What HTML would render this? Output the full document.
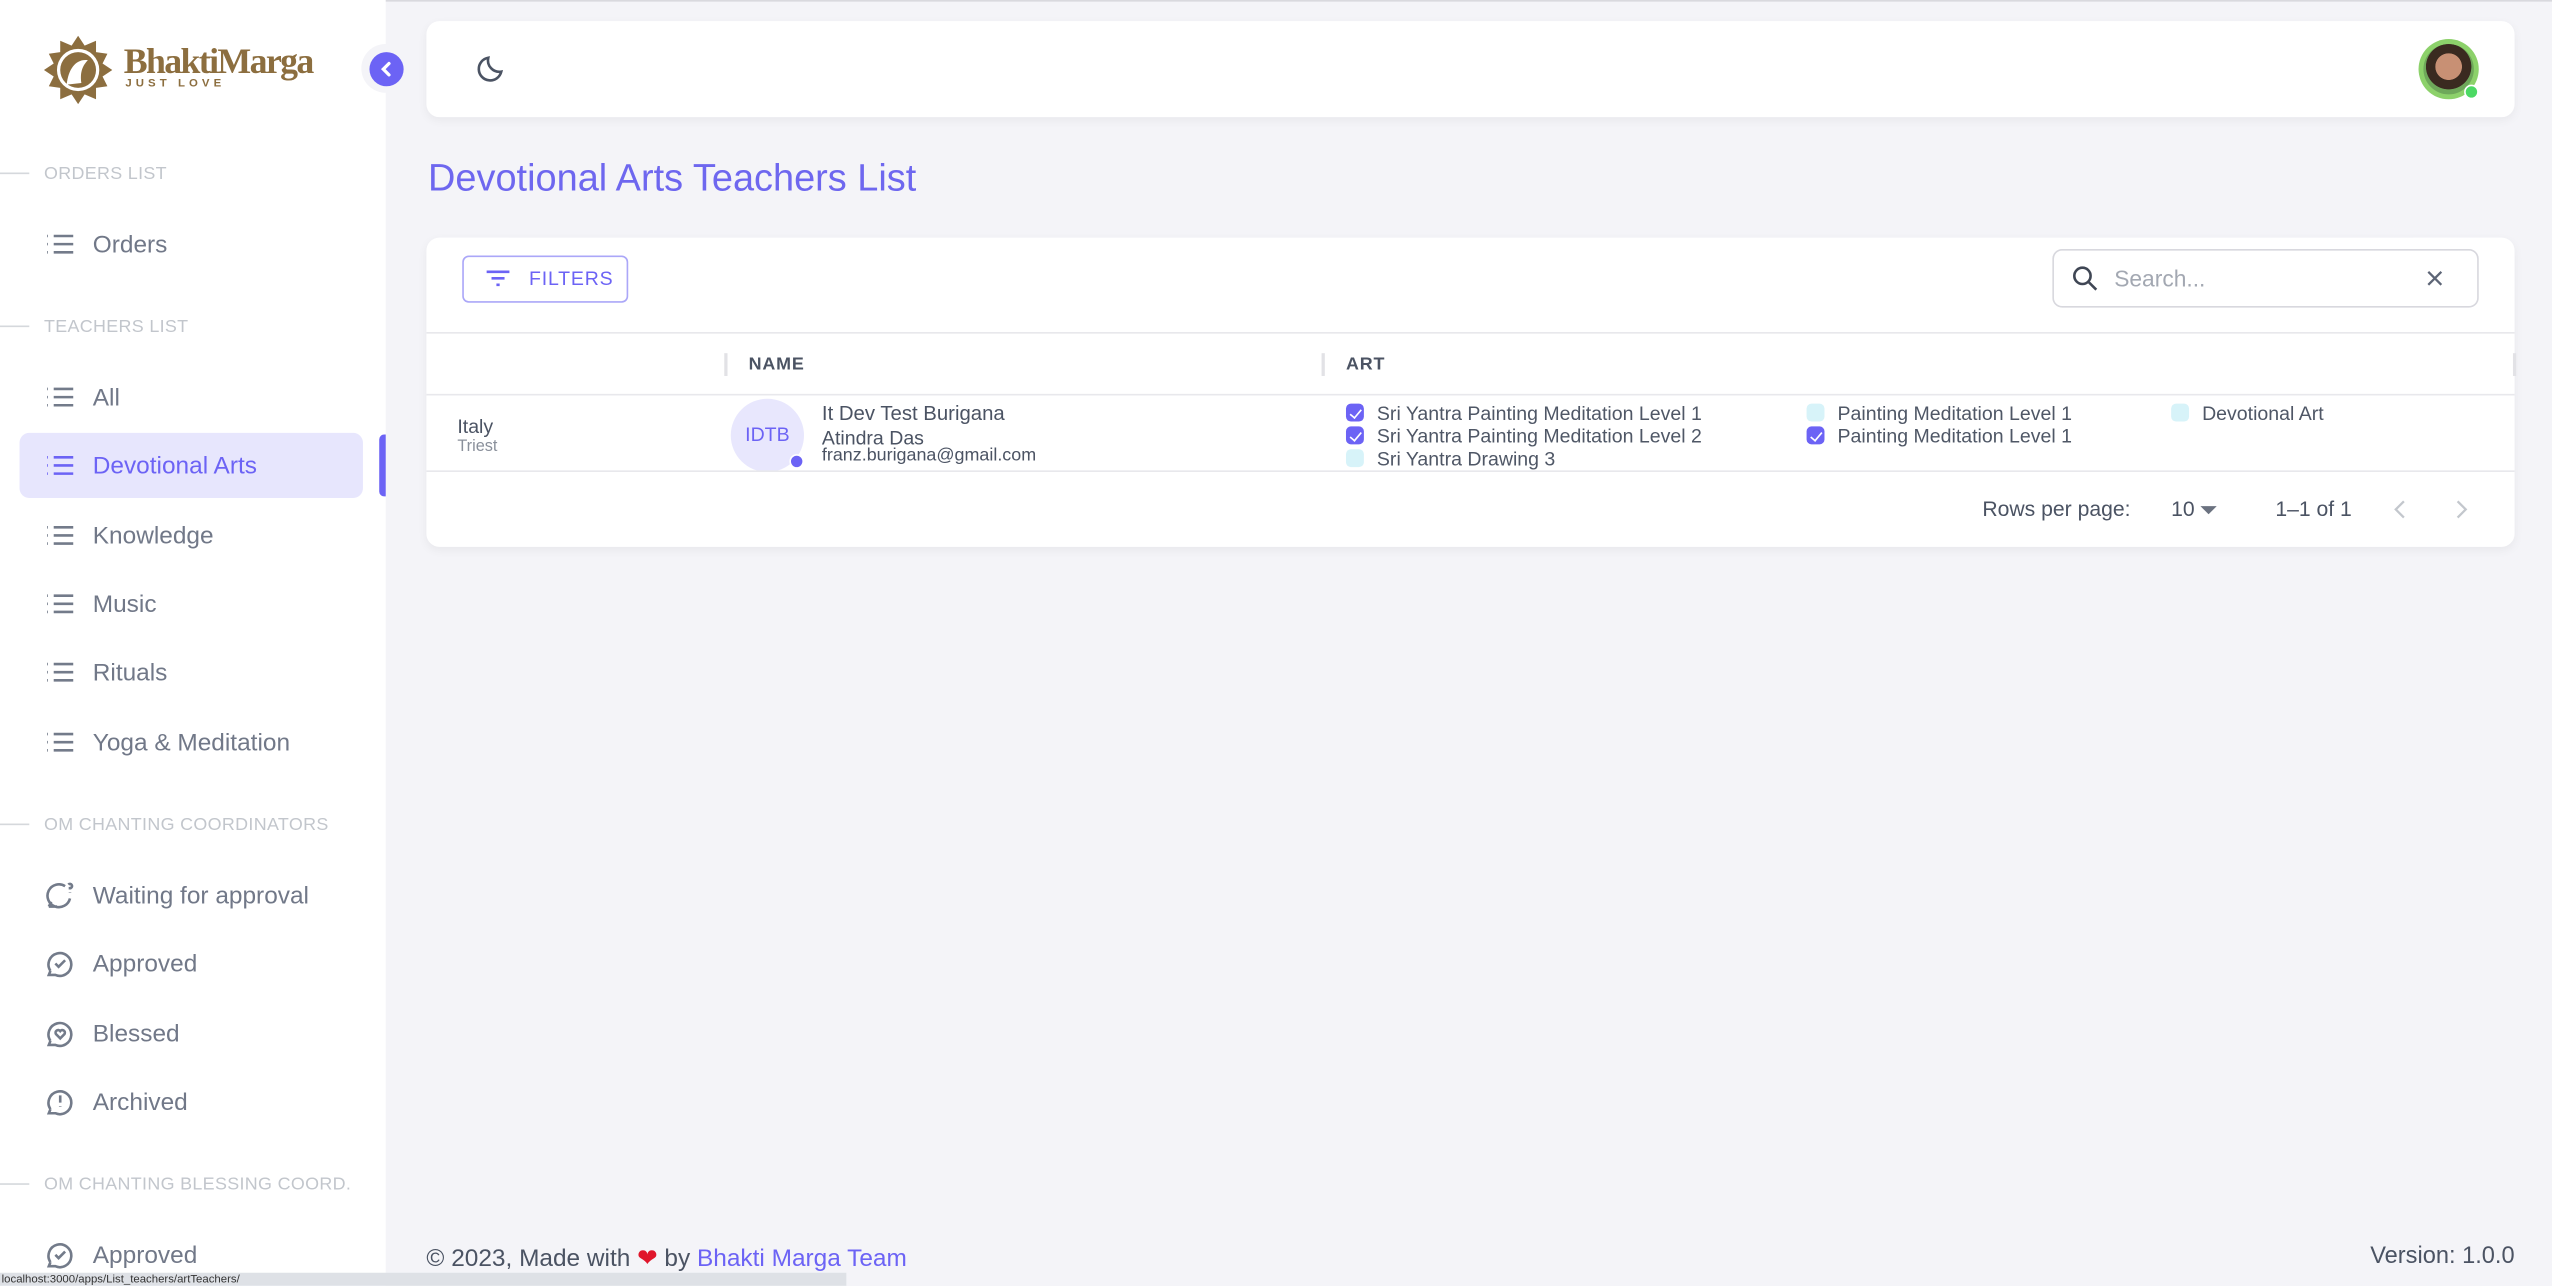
<!DOCTYPE html>
<html><head><meta charset="utf-8"><style>
*{box-sizing:border-box;margin:0;padding:0}
html,body{width:2552px;height:1286px;overflow:hidden;background:#f4f4f8}
#w{position:absolute;left:0;top:0;width:1568px;height:790px;transform:scale(1.62755);transform-origin:0 0;font-family:"Liberation Sans",sans-serif;color:#5d6576}
.a{position:absolute;white-space:nowrap}
.sb{position:absolute;left:0;top:0;width:237px;height:790px;background:#fff}
.sec{font-size:11px;color:#c2c6cc;letter-spacing:.2px}
.ln{position:absolute;left:0;width:18px;height:1px;background:#d5d8dc}
.it{font-size:15px;color:#717888;margin-top:1px}
.ic{position:absolute;left:28px;width:18px;height:18px}
.card{position:absolute;background:#fff;border-radius:8px;box-shadow:0 2px 6px rgba(0,0,0,.05)}
.cb{position:absolute;width:11px;height:11px;border-radius:3px;background:#d7f3f9}
.cb.on{background:#6c63f5}
.cb.on:after{content:"";position:absolute;left:3.5px;top:1.5px;width:3px;height:6px;border:solid #fff;border-width:0 1.3px 1.3px 0;transform:rotate(40deg)}
.art{font-size:12px;color:#4f5766}
</style></head><body><div id="w">
<div class="a" style="left:0;top:0;width:1568px;height:1px;background:#d9d9de"></div>
<div class="sb">
 <svg class="a" style="left:27px;top:22px" width="42" height="42" viewBox="0 0 42 42"><g fill="#8c6e3f"><polygon points="21,0 25,6 32,3 32,10 39,11 36,17 42,21 36,25 39,31 32,32 32,39 25,36 21,42 17,36 10,39 10,32 3,31 6,25 0,21 6,17 3,11 10,10 10,3 17,6"/></g><circle cx="21" cy="21" r="13" fill="#fff"/><circle cx="21" cy="21" r="11" fill="#8c6e3f"/><path d="M14 30 C15 20 20 14 27 15 C24 18 22 22 23 29 Z" fill="#fff"/></svg>
 <div class="a" style="left:76px;top:25px;font-family:'Liberation Serif',serif;font-weight:bold;font-size:22px;color:#8c6e3f;letter-spacing:-1px">BhaktiMarga</div>
 <div class="a" style="left:77px;top:48px;font-size:7px;font-weight:bold;color:#8c6e3f;letter-spacing:2.5px">JUST LOVE</div>
 <div class="ln" style="top:106px"></div><div class="a sec" style="left:27px;top:101px">ORDERS LIST</div>
 <div class="ln" style="top:200px"></div><div class="a sec" style="left:27px;top:195px">TEACHERS LIST</div>
 <div class="ln" style="top:506px"></div><div class="a sec" style="left:27px;top:501px">OM CHANTING COORDINATORS</div>
 <div class="ln" style="top:727px"></div><div class="a sec" style="left:27px;top:722px">OM CHANTING BLESSING COORD.</div>
 <div class="a" style="left:12px;top:266px;width:211px;height:40px;background:#e7e6fd;border-radius:6px"></div>
 <div class="a" style="left:233px;top:267px;width:4px;height:38px;background:#6c63f5;border-radius:3px 0 0 3px"></div>
 <svg class="ic" style="top:141px" viewBox="0 0 18 18" stroke="#737b8a" stroke-width="1.6" fill="none"><path d="M5 4h12M5 9h12M5 14h12M1 4h.5M1 9h.5M1 14h.5"/></svg><div class="a it" style="left:57px;top:141px">Orders</div>
 <svg class="ic" style="top:235px" viewBox="0 0 18 18" stroke="#737b8a" stroke-width="1.6" fill="none"><path d="M5 4h12M5 9h12M5 14h12M1 4h.5M1 9h.5M1 14h.5"/></svg><div class="a it" style="left:57px;top:235px">All</div>
 <svg class="ic" style="top:277px" viewBox="0 0 18 18" stroke="#6c63f5" stroke-width="1.6" fill="none"><path d="M5 4h12M5 9h12M5 14h12M1 4h.5M1 9h.5M1 14h.5"/></svg><div class="a it" style="left:57px;top:277px;color:#6c63f5">Devotional Arts</div>
 <svg class="ic" style="top:320px" viewBox="0 0 18 18" stroke="#737b8a" stroke-width="1.6" fill="none"><path d="M5 4h12M5 9h12M5 14h12M1 4h.5M1 9h.5M1 14h.5"/></svg><div class="a it" style="left:57px;top:320px">Knowledge</div>
 <svg class="ic" style="top:362px" viewBox="0 0 18 18" stroke="#737b8a" stroke-width="1.6" fill="none"><path d="M5 4h12M5 9h12M5 14h12M1 4h.5M1 9h.5M1 14h.5"/></svg><div class="a it" style="left:57px;top:362px">Music</div>
 <svg class="ic" style="top:404px" viewBox="0 0 18 18" stroke="#737b8a" stroke-width="1.6" fill="none"><path d="M5 4h12M5 9h12M5 14h12M1 4h.5M1 9h.5M1 14h.5"/></svg><div class="a it" style="left:57px;top:404px">Rituals</div>
 <svg class="ic" style="top:447px" viewBox="0 0 18 18" stroke="#737b8a" stroke-width="1.6" fill="none"><path d="M5 4h12M5 9h12M5 14h12M1 4h.5M1 9h.5M1 14h.5"/></svg><div class="a it" style="left:57px;top:447px">Yoga &amp; Meditation</div>
 <svg class="ic" style="top:541px" viewBox="0 0 18 18" stroke="#737b8a" stroke-width="1.6" fill="none"><path d="M12 3.5A7 7 0 1 0 15 11M2 16l1.5-3M2 16h5"/><path d="M14 2.5a1.3 1.3 0 1 1 1 2.2v.8M15 7.3v.3"/></svg><div class="a it" style="left:57px;top:541px">Waiting for approval</div>
 <svg class="ic" style="top:583px" viewBox="0 0 18 18" stroke="#737b8a" stroke-width="1.6" fill="none"><path d="M3 13.5A7 7 0 1 1 6 16H2l1-2.5"/><path d="M6 9l2 2 4-4"/></svg><div class="a it" style="left:57px;top:583px">Approved</div>
 <svg class="ic" style="top:626px" viewBox="0 0 18 18" stroke="#737b8a" stroke-width="1.6" fill="none"><path d="M3 13.5A7 7 0 1 1 6 16H2l1-2.5"/><path d="M9 12L6.5 9.5a1.5 1.5 0 0 1 2.5-2 1.5 1.5 0 0 1 2.5 2z"/></svg><div class="a it" style="left:57px;top:626px">Blessed</div>
 <svg class="ic" style="top:668px" viewBox="0 0 18 18" stroke="#737b8a" stroke-width="1.6" fill="none"><path d="M3 13.5A7 7 0 1 1 6 16H2l1-2.5"/><path d="M9 5v4.5M9 11.8v.4"/></svg><div class="a it" style="left:57px;top:668px">Archived</div>
 <svg class="ic" style="top:762px" viewBox="0 0 18 18" stroke="#737b8a" stroke-width="1.6" fill="none"><path d="M3 13.5A7 7 0 1 1 6 16H2l1-2.5"/><path d="M6 9l2 2 4-4"/></svg><div class="a it" style="left:57px;top:762px">Approved</div>
</div>
<div class="a" style="left:222px;top:27px;width:30px;height:30px;border-radius:50%;background:#f4f4f8"></div>
<div class="a" style="left:227px;top:32px;width:21px;height:21px;border-radius:50%;background:#6c63f5"></div>
<svg class="a" style="left:231px;top:36px" width="13" height="13" viewBox="0 0 13 13"><path d="M8 3L4.5 6.5 8 10" stroke="#fff" stroke-width="2" fill="none" stroke-linecap="round"/></svg>
<div class="a" style="left:0;top:782px;width:520px;height:8px;background:#dee1e6;font-size:7px;line-height:10px;color:#333;overflow:hidden;padding-left:1px">localhost:3000/apps/List_teachers/artTeachers/</div>

<div class="card" style="left:262px;top:13px;width:1283px;height:59px"></div>
<svg class="a" style="left:292px;top:32px" width="20" height="20" viewBox="0 0 20 20"><path d="M16 12A7 7 0 0 1 8 3.5 7 7 0 1 0 16 12z" stroke="#4b5363" stroke-width="1.6" fill="none"/></svg>
<div class="a" style="left:1486px;top:24px;width:37px;height:37px;border-radius:50%;background:#8cd16a"></div>
<div class="a" style="left:1489px;top:27px;width:31px;height:31px;border-radius:50%;background:radial-gradient(circle at 50% 45%,#c89074 0 35%,#3a2a20 36% 60%,#6ea85a 61%)"></div>
<div class="a" style="left:1514px;top:52px;width:9px;height:9px;border-radius:50%;background:#4cd964;border:1.5px solid #fff"></div>

<div class="a" style="left:263px;top:96px;font-size:23.3px;color:#6e67ef">Devotional Arts Teachers List</div>

<div class="card" style="left:262px;top:146px;width:1283px;height:190px"></div>
<div class="a" style="left:284px;top:157px;width:102px;height:29px;border:1px solid #aba7f8;border-radius:4px"></div>
<svg class="a" style="left:298px;top:164px" width="16" height="14" viewBox="0 0 16 14"><path d="M1 3h14M4 7h8M7 11h2" stroke="#6c63f5" stroke-width="1.6"/></svg>
<div class="a" style="left:325px;top:164px;font-size:12px;color:#6c63f5;letter-spacing:.5px">FILTERS</div>
<div class="a" style="left:1261px;top:153px;width:262px;height:36px;border:1px solid #d8d8de;border-radius:6px"></div>
<svg class="a" style="left:1273px;top:163px" width="16" height="16" viewBox="0 0 16 16"><circle cx="6.5" cy="6.5" r="5" stroke="#3f4654" stroke-width="1.6" fill="none"/><path d="M10.5 10.5L15 15" stroke="#3f4654" stroke-width="1.6"/></svg>
<div class="a" style="left:1299px;top:163px;font-size:14px;color:#a3a8b2">Search...</div>
<svg class="a" style="left:1491px;top:166px" width="10" height="10" viewBox="0 0 10 10"><path d="M1 1l8 8M9 1L1 9" stroke="#5d6576" stroke-width="1.4"/></svg>
<div class="a" style="left:262px;top:204px;width:1283px;height:1px;background:#e8e8ec"></div>
<div class="a" style="left:445px;top:217px;width:1.5px;height:14px;background:#e2e2e6"></div>
<div class="a" style="left:812px;top:217px;width:1.5px;height:14px;background:#e2e2e6"></div>
<div class="a" style="left:1544px;top:217px;width:1.5px;height:14px;background:#e2e2e6"></div>
<div class="a" style="left:460px;top:218px;font-size:11px;font-weight:bold;color:#4b5363;letter-spacing:.5px">NAME</div>
<div class="a" style="left:827px;top:218px;font-size:11px;font-weight:bold;color:#4b5363;letter-spacing:.5px">ART</div>
<div class="a" style="left:262px;top:242px;width:1283px;height:1px;background:#e8e8ec"></div>
<div class="a" style="left:281px;top:255px;font-size:12px;color:#4b5363">Italy</div>
<div class="a" style="left:281px;top:269px;font-size:10px;color:#8a909b">Triest</div>
<div class="a" style="left:449px;top:245px;width:45px;height:45px;border-radius:50%;background:#e8e7fd"></div>
<div class="a" style="left:449px;top:260px;width:45px;text-align:center;font-size:12px;color:#6c63f5">IDTB</div>
<div class="a" style="left:485px;top:279px;width:9px;height:9px;border-radius:50%;background:#6c63f5;border:1.5px solid #fff"></div>
<div class="a" style="left:505px;top:247px;font-size:12.5px;color:#4b5363">It Dev Test Burigana</div>
<div class="a" style="left:505px;top:262px;font-size:12px;color:#4b5363">Atindra Das</div>
<div class="a" style="left:505px;top:274px;font-size:11px;color:#4b5363">franz.burigana@gmail.com</div>
<div class="cb on" style="left:827px;top:248px"></div><div class="a art" style="left:846px;top:247px">Sri Yantra Painting Meditation Level 1</div>
<div class="cb on" style="left:827px;top:262px"></div><div class="a art" style="left:846px;top:261px">Sri Yantra Painting Meditation Level 2</div>
<div class="cb" style="left:827px;top:276px"></div><div class="a art" style="left:846px;top:275px">Sri Yantra Drawing 3</div>
<div class="cb" style="left:1110px;top:248px"></div><div class="a art" style="left:1129px;top:247px">Painting Meditation Level 1</div>
<div class="cb on" style="left:1110px;top:262px"></div><div class="a art" style="left:1129px;top:261px">Painting Meditation Level 1</div>
<div class="cb" style="left:1334px;top:248px"></div><div class="a art" style="left:1353px;top:247px">Devotional Art</div>
<div class="a" style="left:262px;top:289px;width:1283px;height:1px;background:#e8e8ec"></div>
<div class="a" style="left:1218px;top:305px;font-size:13px;color:#4b5363">Rows per page:</div>
<div class="a" style="left:1334px;top:305px;font-size:13px;color:#4b5363">10</div>
<div class="a" style="left:1352px;top:311px;width:0;height:0;border-left:5px solid transparent;border-right:5px solid transparent;border-top:5px solid #6b7280"></div>
<div class="a" style="left:1398px;top:305px;font-size:13px;color:#4b5363">1–1 of 1</div>
<svg class="a" style="left:1469px;top:306px" width="12" height="14" viewBox="0 0 12 14"><path d="M8 2L3 7l5 5" stroke="#c3c7cd" stroke-width="1.4" fill="none"/></svg>
<svg class="a" style="left:1506px;top:306px" width="12" height="14" viewBox="0 0 12 14"><path d="M4 2l5 5-5 5" stroke="#c3c7cd" stroke-width="1.4" fill="none"/></svg>

<div class="a" style="left:262px;top:764px;font-size:15px;color:#4b5363">© 2023, Made with <span style="color:#e0162b">❤</span> by <span style="color:#6c63f5">Bhakti Marga Team</span></div>
<div class="a" style="right:23px;top:764px;font-size:14.5px;color:#4b5363">Version: 1.0.0</div>
</div></body></html>
